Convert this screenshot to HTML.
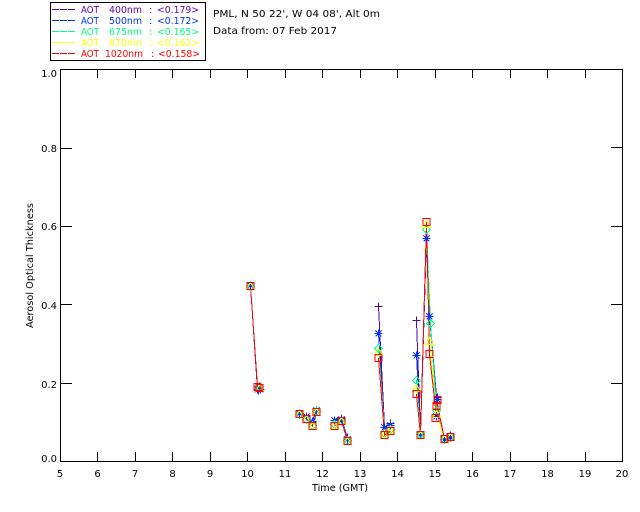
<!DOCTYPE html>
<html><head><meta charset="utf-8"><style>
html,body{margin:0;padding:0;background:#fff}
svg{display:block}
text{font-family:"DejaVu Sans","Liberation Sans",sans-serif;font-size:10px;fill:#000}
.m text{text-anchor:middle}
</style></head><body>
<svg width="640" height="512" viewBox="0 0 640 512" xmlns="http://www.w3.org/2000/svg">
<defs>
<g id="p" fill="none" stroke="#5500aa"><path d="M-4 0H4M0-4V4"/></g>
<g id="b" fill="none" stroke="#0033ff"><path d="M-4 0H4M0-4V4M-3-3L3 3M-3 3L3-3"/></g>
<g id="g" fill="none" stroke="#00ff80"><path d="M0-4L4 0L0 4L-4 0Z"/></g>
<g id="y" fill="none" stroke="#ffff00"><path d="M0-4L4 3H-4Z"/></g>
<g id="r" fill="none" stroke="#ff0000"><rect x="-3.5" y="-3.5" width="7" height="7"/></g>
</defs>
<g shape-rendering="crispEdges" fill="none" stroke="#000">
<rect x="50.5" y="2.5" width="155" height="58"/>
<rect x="60.5" y="69.5" width="562" height="392"/>
<path d="M97.5 461V452M135.5 461V452M172.5 461V452M210.5 461V452M247.5 461V452M285.5 461V452M322.5 461V452M360.5 461V452M397.5 461V452M435.5 461V452M472.5 461V452M510.5 461V452M547.5 461V452M585.5 461V452"/>
<path d="M97.5 70V78M135.5 70V78M172.5 70V78M210.5 70V78M247.5 70V78M285.5 70V78M322.5 70V78M360.5 70V78M397.5 70V78M435.5 70V78M472.5 70V78M510.5 70V78M547.5 70V78M585.5 70V78"/>
<path d="M61 148.5H72M61 226.5H72M61 304.5H72M61 383.5H72"/>
<path d="M622 147.5H611M622 226.5H611M622 304.5H611M622 383.5H611"/>
<g stroke-dasharray="7 1">
<path d="M52 9.5H75" stroke="#5500aa"/>
<path d="M52 20.5H75" stroke="#0033ff"/>
<path d="M52 31.5H75" stroke="#00ff80"/>
<path d="M52 42.5H75" stroke="#ffff00"/>
<path d="M52 53.5H75" stroke="#ff0000"/>
</g>
</g>

<g>
<text x="81" y="13" textLength="18" lengthAdjust="spacingAndGlyphs" style="fill:#5500aa">AOT</text><text x="109" y="13" textLength="33" lengthAdjust="spacingAndGlyphs" style="fill:#5500aa">400nm</text><text x="149" y="13" style="fill:#5500aa">:</text><text x="157" y="13" textLength="42" lengthAdjust="spacingAndGlyphs" style="fill:#5500aa">&lt;0.179&gt;</text>
<text x="81" y="24" textLength="18" lengthAdjust="spacingAndGlyphs" style="fill:#0033ff">AOT</text><text x="109" y="24" textLength="33" lengthAdjust="spacingAndGlyphs" style="fill:#0033ff">500nm</text><text x="149" y="24" style="fill:#0033ff">:</text><text x="157" y="24" textLength="42" lengthAdjust="spacingAndGlyphs" style="fill:#0033ff">&lt;0.172&gt;</text>
<text x="81" y="35" textLength="18" lengthAdjust="spacingAndGlyphs" style="fill:#00ff80">AOT</text><text x="109" y="35" textLength="33" lengthAdjust="spacingAndGlyphs" style="fill:#00ff80">675nm</text><text x="149" y="35" style="fill:#00ff80">:</text><text x="157" y="35" textLength="42" lengthAdjust="spacingAndGlyphs" style="fill:#00ff80">&lt;0.165&gt;</text>
<text x="81" y="46" textLength="18" lengthAdjust="spacingAndGlyphs" style="fill:#ffff00">AOT</text><text x="109" y="46" textLength="33" lengthAdjust="spacingAndGlyphs" style="fill:#ffff00">870nm</text><text x="149" y="46" style="fill:#ffff00">:</text><text x="157" y="46" textLength="42" lengthAdjust="spacingAndGlyphs" style="fill:#ffff00">&lt;0.162&gt;</text>
<text x="81" y="57" textLength="18" lengthAdjust="spacingAndGlyphs" style="fill:#ff0000">AOT</text><text x="105" y="57" textLength="38" lengthAdjust="spacingAndGlyphs" style="fill:#ff0000">1020nm</text><text x="151" y="57" style="fill:#ff0000">:</text><text x="158" y="57" textLength="42" lengthAdjust="spacingAndGlyphs" style="fill:#ff0000">&lt;0.158&gt;</text>
</g>

<text x="213" y="17" textLength="167" lengthAdjust="spacingAndGlyphs">PML, N 50 22', W 04 08', Alt 0m</text>
<text x="213" y="34" textLength="124" lengthAdjust="spacingAndGlyphs">Data from: 07 Feb 2017</text>

<text x="57" y="77" text-anchor="end">1.0</text>
<text x="57" y="152" text-anchor="end">0.8</text>
<text x="57" y="230" text-anchor="end">0.6</text>
<text x="57" y="309" text-anchor="end">0.4</text>
<text x="57" y="388" text-anchor="end">0.2</text>
<text x="57" y="462" text-anchor="end">0.0</text>
<g class="m">
<text x="60" y="477">5</text><text x="97.5" y="477">6</text><text x="135" y="477">7</text><text x="172.5" y="477">8</text><text x="210" y="477">9</text><text x="247.5" y="477">10</text><text x="285" y="477">11</text><text x="322.5" y="477">12</text><text x="360" y="477">13</text><text x="397.5" y="477">14</text><text x="435" y="477">15</text><text x="472.5" y="477">16</text><text x="510" y="477">17</text><text x="547.5" y="477">18</text><text x="585" y="477">19</text><text x="622" y="477">20</text>
</g>
<text x="312" y="491" textLength="56" lengthAdjust="spacingAndGlyphs">Time (GMT)</text>
<text transform="translate(33 328) rotate(-90)" textLength="125" lengthAdjust="spacingAndGlyphs">Aerosol Optical Thickness</text>

<g fill="none" shape-rendering="crispEdges">
<g stroke="#5500aa">
<path d="M250.5 285L257.5 390L260.5 390M299.5 413L306.5 417L312.5 421L316.5 408M334.5 419L341.5 419L347.5 438M378.5 306L384.5 427L390.5 424M416.5 321L420.5 433L426.5 238L429.5 314L436.5 397L437.5 405L444.5 439L450.5 436"/>
</g>
<g stroke="#0033ff">
<path d="M250.5 285L257.5 389L260.5 389M299.5 413L306.5 416L312.5 421L316.5 410M334.5 420L341.5 419L347.5 439M378.5 333L384.5 427L390.5 425M416.5 355L420.5 434L426.5 238L429.5 316L436.5 399L437.5 416L444.5 439L450.5 437"/>
</g>
<g stroke="#00ff80">
<path d="M250.5 286L257.5 386L260.5 387M299.5 414L306.5 419L312.5 425L316.5 411M334.5 424L341.5 421L347.5 440M378.5 348L384.5 433L390.5 429M416.5 380L420.5 434L426.5 229L430.5 323L436.5 410L437.5 415L444.5 439L450.5 437"/>
</g>
<g stroke="#ffff00">
<path d="M250.5 286L257.5 387L260.5 388M299.5 414L306.5 419L312.5 426L316.5 412M334.5 425L341.5 421L347.5 441M378.5 352L384.5 434L390.5 430M416.5 388L420.5 435L426.5 224L429.5 341L436.5 414L437.5 417L444.5 439L450.5 437"/>
</g>
<g stroke="#ff0000">
<path d="M250.5 286L257.5 387L259.5 388M299.5 414L306.5 419L312.5 426L316.5 412M334.5 426L341.5 421L347.5 441M378.5 358L384.5 435L390.5 431M416.5 394L420.5 435L426.5 222L429.5 354L436.5 417L437.5 400L437.5 406L444.5 439L450.5 437"/>
</g>
</g>

<g shape-rendering="crispEdges">
<use href="#p" x="250.5" y="285.5"/><use href="#p" x="378.5" y="306.5"/><use href="#p" x="416.5" y="320.5"/><use href="#p" x="426.5" y="238.5"/><use href="#p" x="437.5" y="397.5"/><use href="#p" x="450.5" y="435.5"/><use href="#p" x="341.5" y="418.5"/><use href="#p" x="347.5" y="437.5"/><use href="#p" x="390.5" y="423.5"/><use href="#p" x="258.5" y="390.5"/>
<use href="#b" x="250.5" y="285.5"/><use href="#b" x="257.5" y="389.5"/><use href="#b" x="260.5" y="389.5"/><use href="#b" x="299.5" y="413.5"/><use href="#b" x="306.5" y="416.5"/><use href="#b" x="312.5" y="421.5"/><use href="#b" x="316.5" y="410.5"/><use href="#b" x="334.5" y="420.5"/><use href="#b" x="341.5" y="419.5"/><use href="#b" x="347.5" y="439.5"/><use href="#b" x="378.5" y="333.5"/><use href="#b" x="384.5" y="427.5"/><use href="#b" x="390.5" y="425.5"/><use href="#b" x="416.5" y="355.5"/><use href="#b" x="420.5" y="434.5"/><use href="#b" x="426.5" y="238.5"/><use href="#b" x="429.5" y="316.5"/><use href="#b" x="437.5" y="399.5"/><use href="#b" x="436.5" y="416.5"/><use href="#b" x="444.5" y="439.5"/><use href="#b" x="450.5" y="437.5"/>
<use href="#g" x="250.5" y="286.5"/><use href="#g" x="259.5" y="386.5"/><use href="#g" x="299.5" y="414.5"/><use href="#g" x="306.5" y="419.5"/><use href="#g" x="312.5" y="425.5"/><use href="#g" x="316.5" y="411.5"/><use href="#g" x="334.5" y="424.5"/><use href="#g" x="341.5" y="421.5"/><use href="#g" x="347.5" y="440.5"/><use href="#g" x="378.5" y="348.5"/><use href="#g" x="384.5" y="433.5"/><use href="#g" x="390.5" y="429.5"/><use href="#g" x="416.5" y="380.5"/><use href="#g" x="420.5" y="434.5"/><use href="#g" x="426.5" y="229.5"/><use href="#g" x="430.5" y="323.5"/><use href="#g" x="436.5" y="410.5"/><use href="#g" x="444.5" y="439.5"/><use href="#g" x="450.5" y="437.5"/>
<use href="#y" x="250.5" y="286.5"/><use href="#y" x="259.5" y="388.5"/><use href="#y" x="299.5" y="414.5"/><use href="#y" x="306.5" y="419.5"/><use href="#y" x="312.5" y="426.5"/><use href="#y" x="316.5" y="412.5"/><use href="#y" x="334.5" y="425.5"/><use href="#y" x="341.5" y="421.5"/><use href="#y" x="347.5" y="441.5"/><use href="#y" x="378.5" y="352.5"/><use href="#y" x="384.5" y="434.5"/><use href="#y" x="390.5" y="430.5"/><use href="#y" x="416.5" y="388.5"/><use href="#y" x="420.5" y="435.5"/><use href="#y" x="426.5" y="224.5"/><use href="#y" x="429.5" y="341.5"/><use href="#y" x="436.5" y="414.5"/><use href="#y" x="444.5" y="439.5"/><use href="#y" x="450.5" y="437.5"/>
<use href="#r" x="250.5" y="286"/><use href="#r" x="257.5" y="387"/><use href="#r" x="259.5" y="388"/><use href="#r" x="299.5" y="414"/><use href="#r" x="306.5" y="419"/><use href="#r" x="312.5" y="426"/><use href="#r" x="316.5" y="412"/><use href="#r" x="334.5" y="426"/><use href="#r" x="341.5" y="421"/><use href="#r" x="347.5" y="441"/><use href="#r" x="378.5" y="358"/><use href="#r" x="384.5" y="435"/><use href="#r" x="390.5" y="431"/><use href="#r" x="416.5" y="394"/><use href="#r" x="420.5" y="435"/><use href="#r" x="426.5" y="222"/><use href="#r" x="429.5" y="354"/><use href="#r" x="437.5" y="400"/><use href="#r" x="436.5" y="406"/><use href="#r" x="435.5" y="418"/><use href="#r" x="444.5" y="439"/><use href="#r" x="450.5" y="437"/>
</g>
</svg>
</body></html>
